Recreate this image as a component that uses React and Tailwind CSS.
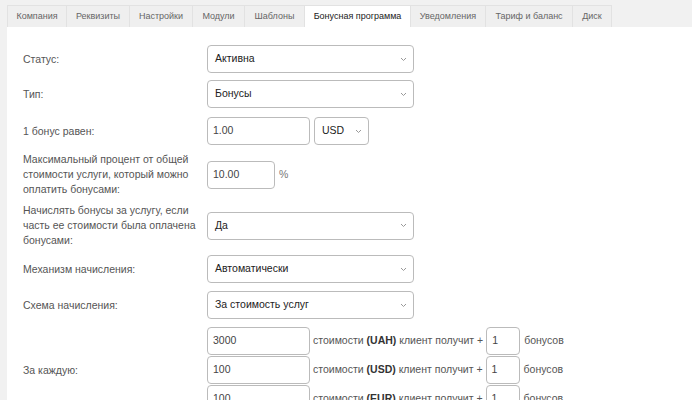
import React from "react";

const tabs = [
  ["Компания", 60],
  ["Реквизиты", 63],
  ["Настройки", 63],
  ["Модули", 52],
  ["Шаблоны", 60],
  ["Бонусная программа", 106],
  ["Уведомления", 75],
  ["Тариф и баланс", 87],
  ["Диск", 39],
];

function Chevron() {
  return (
    <svg width="7" height="5" viewBox="0 0 7 5" className="shrink-0">
      <path d="M1 1 L3.5 3.5 L6 1" fill="none" stroke="#999" strokeWidth="1" />
    </svg>
  );
}

function Select({ value, w = "w-[207px]" }) {
  return (
    <div className={`${w} h-[28px] border border-[#bbbbbb] rounded-[4px] bg-white flex items-center justify-between pl-[7px] pr-[6px] text-[10.5px] text-[#222]`}>
      <span>{value}</span>
      <Chevron />
    </div>
  );
}

function Input({ value, w }) {
  return (
    <div className={`${w} h-[28px] border border-[#bbbbbb] rounded-[4px] bg-white flex items-center pl-[5px] text-[10.5px] text-[#444]`}>
      {value}
    </div>
  );
}

function Row({ label, children, className = "" }) {
  return (
    <div className={`flex items-center ${className}`}>
      <div className="w-[184px] shrink-0 pr-[8px] text-[10.5px] leading-[15px] text-[#555]">{label}</div>
      {children}
    </div>
  );
}

export default function App() {
  const rows = [
    ["3000", "UAH"],
    ["100", "USD"],
    ["100", "EUR"],
  ];
  return (
    <div className="w-[692px] h-[400px] overflow-hidden bg-[#f1f1f1] pt-[5px] pl-[7px]" style={{ fontFamily: '"Liberation Sans", Arial, sans-serif' }}>
      <div className="flex h-[22px]">
        {tabs.map(([t, w], i) => {
          const active = i === 5;
          return (
            <div
              key={t}
              style={{ width: w }}
              className={`h-[22px] flex items-center justify-center text-[9px] border-r border-t border-[#e2e2e2] ${i === 0 ? "border-l" : ""} ${active ? "bg-white text-[#222]" : "bg-[#efefef] text-[#666]"}`}
            >
              {t}
            </div>
          );
        })}
      </div>
      <div className="bg-white h-full pl-[16px] pt-[18px] flex flex-col">
        <Row label="Статус:">
          <Select value="Активна" />
        </Row>
        <Row label="Тип:" className="mt-[7px]">
          <Select value="Бонусы" />
        </Row>
        <Row label="1 бонус равен:" className="mt-[9px]">
          <div className="flex gap-[4px]">
            <Input value="1.00" w="w-[103px]" />
            <Select value="USD" w="w-[55px]" />
          </div>
        </Row>
        <Row label="Максимальный процент от общей стоимости услуги, который можно оплатить бонусами:" className="mt-[7px]">
          <div className="flex items-center">
            <Input value="10.00" w="w-[68px]" />
            <span className="ml-[4px] text-[10.5px] text-[#777]">%</span>
          </div>
        </Row>
        <Row label="Начислять бонусы за услугу, если часть ее стоимости была оплачена бонусами:" className="mt-[6px]">
          <Select value="Да" />
        </Row>
        <Row label="Механизм начисления:" className="mt-[7px]">
          <Select value="Автоматически" />
        </Row>
        <Row label="Схема начисления:" className="mt-[8px]">
          <Select value="За стоимость услуг" />
        </Row>
        <Row label="За каждую:" className="mt-[8px]">
          <div className="flex flex-col gap-[1px]">
            {rows.map(([v, c]) => (
              <div key={c} className="flex items-center text-[10.5px] text-[#555]">
                <Input value={v} w="w-[103px]" />
                <span className="ml-[3px] mr-[3px]">
                  стоимости <b className="text-[#333]">({c})</b> клиент получит +
                </span>
                <Input value="1" w="w-[34px]" />
                <span className="ml-[4px]">бонусов</span>
              </div>
            ))}
          </div>
        </Row>
      </div>
    </div>
  );
}
